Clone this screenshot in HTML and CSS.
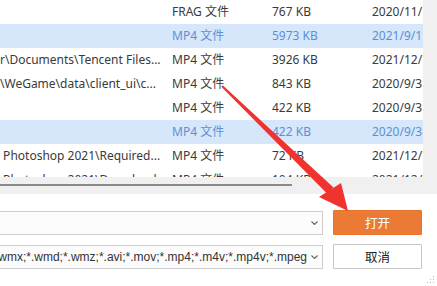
FILE: index.html
```html
<!DOCTYPE html>
<html lang="zh-CN">
<head>
<meta charset="utf-8">
<title>打开文件</title>
<link rel="stylesheet" href="styles.css">
</head>
<body>
<div class="dialog">
  <div class="listarea">
    <div class="list">
      <div class="rows">
        <div class="row"><span class="c-path"></span><span class="c-type">FRAG 文件</span><span class="c-size">767 KB</span><span class="c-date">2020/11/</span></div>
        <div class="row sel"><span class="c-path"></span><span class="c-type">MP4 文件</span><span class="c-size">5973 KB</span><span class="c-date">2021/9/1</span></div>
        <div class="row"><span class="c-path">r\Documents\Tencent Files...</span><span class="c-type">MP4 文件</span><span class="c-size">3926 KB</span><span class="c-date">2021/12/</span></div>
        <div class="row"><span class="c-path">\WeGame\data\client_ui\c...</span><span class="c-type">MP4 文件</span><span class="c-size">843 KB</span><span class="c-date">2020/9/3</span></div>
        <div class="row"><span class="c-path"></span><span class="c-type">MP4 文件</span><span class="c-size">422 KB</span><span class="c-date">2020/9/3</span></div>
        <div class="row sel"><span class="c-path"></span><span class="c-type">MP4 文件</span><span class="c-size">422 KB</span><span class="c-date">2020/9/3</span></div>
        <div class="row"><span class="c-path"> Photoshop 2021\Required...</span><span class="c-type">MP4 文件</span><span class="c-size">72 KB</span><span class="c-date">2021/12/</span></div>
        <div class="row"><span class="c-path"> Photoshop 2021\Download...</span><span class="c-type">MP4 文件</span><span class="c-size">104 KB</span><span class="c-date">2021/12/</span></div>
      </div>
      <div class="vscroll"></div>
    </div>
    <div class="hscroll"><div class="thumb"></div></div>
  </div>
  <div class="form">
    <div class="field"><span class="field-text"></span><svg class="chev" width="7" height="4" viewBox="0 0 7 4"><polyline points="0.5,0.5 3.5,3.5 6.5,0.5" fill="none" stroke="#666" stroke-width="1.1"/></svg></div>
    <button class="btn btn-open">打开</button>
    <div class="field"><span class="field-text filter">wmx;*.wmd;*.wmz;*.avi;*.mov;*.mp4;*.m4v;*.mp4v;*.mpeg</span><svg class="chev" width="7" height="4" viewBox="0 0 7 4"><polyline points="0.5,0.5 3.5,3.5 6.5,0.5" fill="none" stroke="#666" stroke-width="1.1"/></svg></div>
    <button class="btn btn-cancel">取消</button>
  </div>
  <svg class="grip" width="8" height="8" viewBox="0 0 8 8">
    <rect x="6" y="0" width="1" height="1" fill="#b5b5b5"/>
    <rect x="3" y="3" width="1" height="1" fill="#b5b5b5"/>
    <rect x="6" y="3" width="1" height="1" fill="#b5b5b5"/>
    <rect x="0" y="6" width="1" height="1" fill="#b5b5b5"/>
    <rect x="3" y="6" width="1" height="1" fill="#b5b5b5"/>
    <rect x="6" y="6" width="1" height="1" fill="#b5b5b5"/>
  </svg>
  <svg class="arrow" width="437" height="286" viewBox="0 0 437 286">
    <polygon fill="#f0332e" points="221.3,86.7 222.7,85.3 333.5,187.5 327,193.5"/>
    <polygon fill="#f0332e" points="319,197 341,183 348,211"/>
  </svg>
</div>
</body>
</html>
```
FILE: styles.css
```css
* { box-sizing: border-box; }
html, body { margin: 0; padding: 0; background: #fff; }
body {
  width: 437px;
  height: 286px;
  overflow: hidden;
  font-family: "Noto Sans", "Noto Sans CJK SC", sans-serif;
  font-size: 12px;
  color: #3a3a3a;
}
.dialog { position: relative; width: 437px; height: 286px; }
.listarea { display: flex; flex-direction: column; }
.list { display: flex; height: 177px; }
.rows { width: 423px; overflow: hidden; }
.vscroll { flex: 1; background: #f0f0f0; }
.row {
  display: grid;
  grid-template-columns: 172px 100px 100px 1fr;
  height: 24px;
  line-height: 24px;
  white-space: pre;
}
.row > span { overflow: hidden; }
.row.sel { background: #d6e7fb; color: #5d8fd4; }
.hscroll {
  height: 17px;
  background: #f0f0f0;
  padding-top: 7px;
}
.thumb { width: 292px; height: 2px; background: #8a8a8a; }
.form {
  display: grid;
  grid-template-columns: 1fr 89px;
  grid-auto-rows: 25px;
  column-gap: 10px;
  row-gap: 9px;
  align-items: end;
  margin-left: -2px;
  padding: 16px 15px 0 0;
}
.field {
  height: 24px;
  border: 1px solid #cdcdcd;
  background: #fcfcfc;
  display: flex;
  align-items: center;
  justify-content: flex-end;
  gap: 4px;
  padding: 0 4px 0 0;
  overflow: hidden;
}
.field-text {
  flex: none;
  font-family: "Liberation Sans", Arial, sans-serif;
  font-size: 12px;
  color: #333;
  white-space: nowrap;
}
.chev { flex: none; display: block; }
.btn {
  height: 25px;
  font-family: "Noto Sans CJK SC", sans-serif;
  font-size: 12.5px;
  padding: 0;
  border-radius: 1px;
}
.btn-open { background: #eb7a34; border: 1px solid #e5742f; color: #fff; }
.btn-cancel { background: #fff; border: 1px solid #c6c6c6; color: #222; }
.grip { position: absolute; right: 2px; bottom: 2px; }
.arrow { position: absolute; left: 0; top: 0; pointer-events: none; }
```
